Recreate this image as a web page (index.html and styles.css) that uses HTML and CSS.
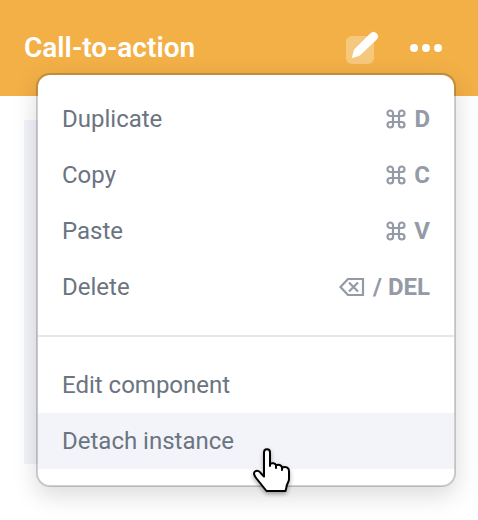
FILE: index.html
```html
<!DOCTYPE html>
<html lang="en">
<head>
<meta charset="utf-8">
<meta name="viewport" content="width=device-width, initial-scale=1">
<title>Call-to-action</title>
<link rel="stylesheet" href="styles.css">
</head>
<body>
<svg class="sprite" aria-hidden="true">
  <symbol id="cmd" viewBox="0 0 20 20">
    <path d="M7 7H4.250A2.750 2.750 0 1 1 7 4.250V15.750A2.750 2.750 0 1 1 4.250 13H15.750A2.750 2.750 0 1 1 13 15.750V4.250A2.750 2.750 0 1 1 15.750 7Z" fill="none" stroke="currentColor" stroke-width="2.200"/>
  </symbol>
</svg>
<header class="header">
  <h1 class="title">Call-to-action</h1>
  <div class="actions">
    <button class="icon-button" type="button" aria-label="Edit">
      <svg width="32" height="32" viewBox="0 0 32 32">
        <rect x="0" y="4" width="28" height="28" rx="6" fill="#fff" fill-opacity=".3"/>
        <path d="M6.500 25.500L8.500 17.500L24.800 1.500Q27.500-1 30.300 1.500Q33.200 4.300 30.500 7.200L14 23Z" fill="#fff" stroke="#fff" stroke-linejoin="round"/>
      </svg>
    </button>
    <button class="icon-button" type="button" aria-label="More" aria-expanded="true">
      <svg width="32" height="32" viewBox="0 0 32 32" fill="#fff">
        <circle cx="4" cy="16" r="4"/><circle cx="16" cy="16" r="4"/><circle cx="28" cy="16" r="4"/>
      </svg>
    </button>
  </div>
  <div class="menu" role="menu">
    <button class="item" type="button" role="menuitem">Duplicate
      <span class="keys"><svg class="cmd" role="img" aria-label="Command"><use href="#cmd"/></svg>D</span></button>
    <button class="item" type="button" role="menuitem">Copy
      <span class="keys"><svg class="cmd" role="img" aria-label="Command"><use href="#cmd"/></svg>C</span></button>
    <button class="item" type="button" role="menuitem">Paste
      <span class="keys"><svg class="cmd" role="img" aria-label="Command"><use href="#cmd"/></svg>V</span></button>
    <button class="item" type="button" role="menuitem">Delete
      <span class="keys"><svg class="backspace" viewBox="0 0 26 18" role="img" aria-label="Backspace" fill="none" stroke="currentColor" stroke-width="2.200">
        <path d="M9 1H24V17H9L1.500 9Z"/><path d="M10 4.500L19 13.500M19 4.500L10 13.500"/></svg>/ DEL</span></button>
    <hr class="divider">
    <button class="item" type="button" role="menuitem">Edit component</button>
    <button class="item item-active" type="button" role="menuitem">Detach instance</button>
    <svg class="cursor" viewBox="0 0 40 48" aria-hidden="true">
      <path d="M12 27V5.500C12 1 18 1 18 5.500V17C20 15.500 23.500 16 24 18.500C26.500 17 29.500 18 30 20.500C33.500 19 37 20.500 37 24V32C37 35.500 34.500 37 34.500 40L33.500 44H14.500L4.500 31.500C2.500 29 1 26 3 24.500C5.500 22.800 8 24.500 9 26.500L12 29.500Z" fill="#fff" stroke="#000" stroke-width="2" stroke-linejoin="round"/>
      <path d="M18 16V19M24 18.500V21M30 20.500V23" stroke="#000" stroke-width="2" stroke-linecap="round"/>
    </svg>
  </div>
</header>
<main class="content">
  <div class="panel"></div>
</main>
</body>
</html>
```
FILE: styles.css
```css
* {
  box-sizing: border-box;
}

body {
  min-height: 100vh;
  margin: 0;
  padding-bottom: 32px;
  background: #fff;
  font-family: Roboto, "Liberation Sans", sans-serif;
}

.sprite {
  position: absolute;
  width: 0;
  height: 0;
}

.header {
  position: relative;
  display: flex;
  align-items: center;
  justify-content: space-between;
  height: 96px;
  padding: 0 36px 0 24px;
  background: #f3b047;
}

.title {
  margin: 0;
  color: #fff;
  font-size: 28px;
  line-height: 32px;
  font-weight: 600;
}

.actions {
  display: flex;
  gap: 32px;
}

.icon-button {
  display: block;
  padding: 0;
  border: 0;
  background: none;
}

.icon-button svg {
  display: block;
  overflow: visible;
}

.menu {
  position: absolute;
  top: 73px;
  left: 36px;
  right: 22px;
  padding: 16px 0;
  border: 2px solid rgba(0, 0, 0, 0.18);
  border-radius: 14px;
  background: #fff;
  background-clip: padding-box;
  box-shadow: 0 8px 24px rgba(0, 0, 0, 0.15);
}

.item {
  display: flex;
  align-items: center;
  justify-content: space-between;
  width: 100%;
  height: 56px;
  padding: 0 24px;
  border: 0;
  background: none;
  color: #6b7480;
  font-family: inherit;
  font-size: 24px;
  line-height: 32px;
  text-align: left;
}

.item-active {
  background: #f3f4fa;
}

.keys {
  display: flex;
  align-items: center;
  gap: 8px;
  color: #949aa6;
  font-weight: 700;
}

.cmd {
  width: 20px;
  height: 20px;
}

.backspace {
  width: 26px;
  height: 18px;
}

.divider {
  height: 2px;
  margin: 20px 0;
  border: 0;
  background: #e6e7ea;
}

.cursor {
  position: absolute;
  left: 214px;
  bottom: -10px;
  width: 40px;
  height: 48px;
  filter: drop-shadow(0 2px 2px rgba(0, 0, 0, 0.35));
}

.content {
  padding: 24px;
}

.panel {
  width: 80%;
  height: 344px;
  background: #f3f4fa;
}
```
